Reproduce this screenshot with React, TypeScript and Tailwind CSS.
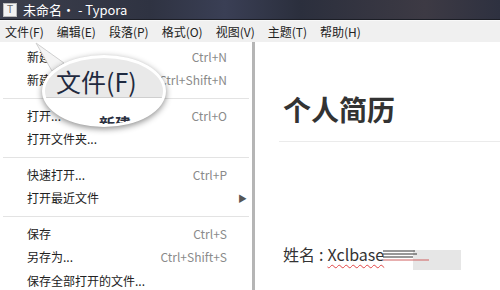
import React from 'react';

type Item = { label: string; shortcut?: string; sub?: boolean } | 'sep';

const items: Item[] = [
  { label: '新建', shortcut: 'Ctrl+N' },
  { label: '新建窗口', shortcut: 'Ctrl+Shift+N' },
  'sep',
  { label: '打开...', shortcut: 'Ctrl+O' },
  { label: '打开文件夹...' },
  'sep',
  { label: '快速打开...', shortcut: 'Ctrl+P' },
  { label: '打开最近文件', sub: true },
  'sep',
  { label: '保存', shortcut: 'Ctrl+S' },
  { label: '另存为...', shortcut: 'Ctrl+Shift+S' },
  { label: '保存全部打开的文件...' },
];

const menus = ['文件(F)', '编辑(E)', '段落(P)', '格式(O)', '视图(V)', '主题(T)', '帮助(H)'];

const font = { fontFamily: '"Noto Sans CJK SC", "Liberation Sans", sans-serif' };

function Magnifier() {
  return (
    <div className="absolute left-[42px] top-[55px] w-[124px] h-[72px]">
      {/* tail */}
      <svg className="absolute -left-[8px] -top-[14px]" width="60" height="40" viewBox="0 0 60 40">
        <polygon points="2,2 30,22 18,30" fill="#f4f4f4" stroke="#d0d0d0" strokeWidth="1" />
      </svg>
      <div className="absolute inset-0 rounded-[50%] border-[3px] border-white shadow-[0_2px_6px_rgba(0,0,0,0.45)] overflow-hidden bg-white">
        <div className="h-[40px] bg-[#e9e9e9] border-b border-[#cfcfcf] flex items-end pl-[11px] pb-[3px]">
          <span className="text-[25px] leading-none text-[#1f2a40]">文件(F)</span>
        </div>
        <div className="pl-[54px] pt-[17px] text-[16px] font-bold leading-none text-[#2a3040]">新建</div>
      </div>
    </div>
  );
}

export default function App() {
  return (
    <div className="relative w-[500px] h-[290px] overflow-hidden bg-white" style={font}>
      {/* title bar */}
      <div className="h-[20px] flex items-center gap-[6px] px-[3px] bg-[linear-gradient(90deg,#3c3f4c_0%,#2f3342_30%,#3a3f55_45%,#2b2f3d_60%,#3d3a44_85%,#2e3140_100%)] border-b border-[#1c1e26]">
        <div className="w-[14px] h-[14px] bg-[#f2f2f2] border border-[#bbb] flex items-center justify-center text-[10px] leading-none text-[#666]" style={{ fontFamily: '"Liberation Sans", sans-serif' }}>T</div>
        <span className="text-[13px] text-white leading-none">未命名• - Typora</span>
      </div>
      {/* menu bar */}
      <div className="h-[22px] flex items-center bg-[#f0f0f0] border-t border-[#f8f8f8] text-[12px] text-[#222] pl-[5px] gap-[13px]">
        {menus.map((m) => (
          <span key={m}>{m}</span>
        ))}
      </div>
      <div className="flex">
        {/* dropdown */}
        <div className="w-[255px] shrink-0 bg-white border-r-[3px] border-[#b5b5b5] pt-[3px] text-[12px] text-[#222]">
          {items.map((it, i) =>
            it === 'sep' ? (
              <div key={i} className="h-[12px] flex items-center px-[3px]">
                <div className="h-px w-full bg-[#e3e3e3]" />
              </div>
            ) : (
              <div key={i} className="h-[23.5px] flex items-center pl-[27px] pr-[25px]">
                <span className="flex-1">{it.label}</span>
                {it.shortcut && <span className="text-[#8a8a8a]">{it.shortcut}</span>}
                {it.sub && <span className="text-[9px] text-[#555] -mr-[20px]">▶</span>}
              </div>
            )
          )}
        </div>
        {/* editor */}
        <div className="flex-1 pl-[28px] text-[#333]">
          <div className="pt-[48px] pb-[13px] -ml-[4px] pl-[4px] border-b border-[#ebebeb] text-[28px] font-bold leading-[38px]">个人简历</div>
          <div className="mt-[94px] flex items-center text-[16px] leading-none">
            <span>姓名</span>
            <span className="mx-[4px]">:</span>
            <span className="underline decoration-wavy decoration-[#e04545] decoration-1 underline-offset-[3px]">Xclbase</span>
            <svg width="80" height="26" viewBox="0 0 80 26" className="-ml-[1px] mt-[10px]">
              <rect x="30" y="4" width="48" height="20" fill="#e2e2e2" opacity="0.85" />
              <path d="M0 5 H32 M0 8 H34 M0 11 H30" stroke="#333" strokeWidth="1.2" />
              <path d="M0 14 H46" stroke="#d06060" strokeWidth="1" />
            </svg>
          </div>
        </div>
      </div>
      <Magnifier />
    </div>
  );
}
